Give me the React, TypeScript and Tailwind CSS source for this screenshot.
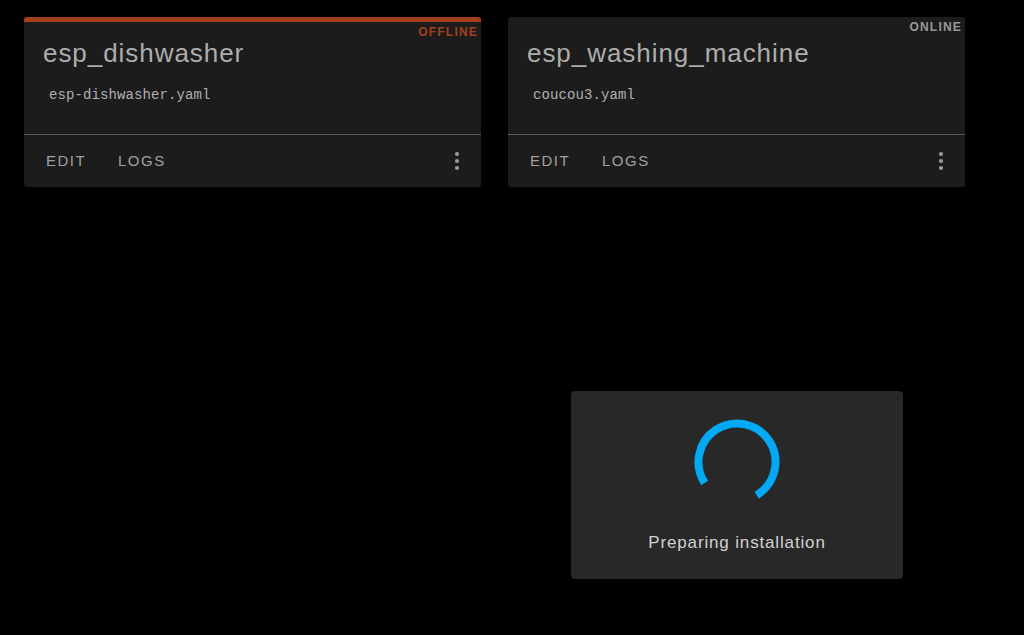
import React from "react";

function Dots() {
  return (
    <svg width="24" height="24" viewBox="0 0 24 24" className="block">
      <circle cx="12" cy="5" r="2.1" fill="#9a9a9a" />
      <circle cx="12" cy="12" r="2.1" fill="#9a9a9a" />
      <circle cx="12" cy="19" r="2.1" fill="#9a9a9a" />
    </svg>
  );
}

function Card({
  name,
  file,
  offline,
}: {
  name: string;
  file: string;
  offline?: boolean;
}) {
  return (
    <div
      className={
        "relative flex w-[457px] flex-col rounded-[3px] bg-[#1c1c1c] " +
        (offline ? "border-t-[5px] border-[#a3401a]" : "")
      }
    >
      <div
        className={
          "absolute right-[3px] text-[12px] font-bold leading-[16px] tracking-[1.2px] " +
          (offline ? "top-[2px] text-[#a3401a]" : "top-[2px] text-[#9a9a9a]")
        }
      >
        {offline ? "OFFLINE" : "ONLINE"}
      </div>
      <div className={"flex flex-col px-[19px] pb-[29px] " + (offline ? "pt-[15px]" : "pt-[20px]")}>
        <div className="text-[26px] leading-[32px] tracking-[0.95px] text-[#adadad]">{name}</div>
        <div className="mt-[16px] pl-[6px] font-['Liberation_Mono',monospace] text-[14px] leading-[20px] tracking-[0.1px] text-[#b0b0b0]">
          {file}
        </div>
      </div>
      <div className="h-px bg-[#5c5c5c]" />
      <div className="flex h-[52px] items-center justify-between pl-[14px] pr-[12px]">
        <div className="flex items-center gap-[8px]">
          <div className="flex h-[36px] min-w-[64px] items-center px-[8px] text-[15px] tracking-[1.5px] text-[#a0a0a0]">
            EDIT
          </div>
          <div className="flex h-[36px] min-w-[64px] items-center px-[8px] text-[15px] tracking-[1.5px] text-[#a0a0a0]">
            LOGS
          </div>
        </div>
        <Dots />
      </div>
    </div>
  );
}

export default function App() {
  const r = 38.5;
  const c = 2 * Math.PI * r;
  const arc = (272 / 360) * c;
  return (
    <div className="relative h-[635px] w-[1024px] overflow-hidden bg-black font-['Liberation_Sans',Arial,sans-serif]">
      <div className="flex gap-[27px] pl-[24px] pt-[17px]">
        <Card name="esp_dishwasher" file="esp-dishwasher.yaml" offline />
        <Card name="esp_washing_machine" file="coucou3.yaml" />
      </div>
      <div className="absolute left-[571px] top-[391px] flex h-[188px] w-[332px] flex-col items-center rounded-[4px] bg-[#282828] pt-[28px]">
        <svg width="86" height="86" viewBox="0 0 86 86" className="block">
          <circle
            cx="43"
            cy="43"
            r={r}
            fill="none"
            stroke="#03a9f4"
            strokeWidth="8"
            strokeDasharray={`${arc} ${c}`}
            transform="rotate(147 43 43)"
          />
        </svg>
        <div className="mt-[26px] text-[17px] leading-[24px] tracking-[0.85px] text-[#d2d2d2]">
          Preparing installation
        </div>
      </div>
    </div>
  );
}
